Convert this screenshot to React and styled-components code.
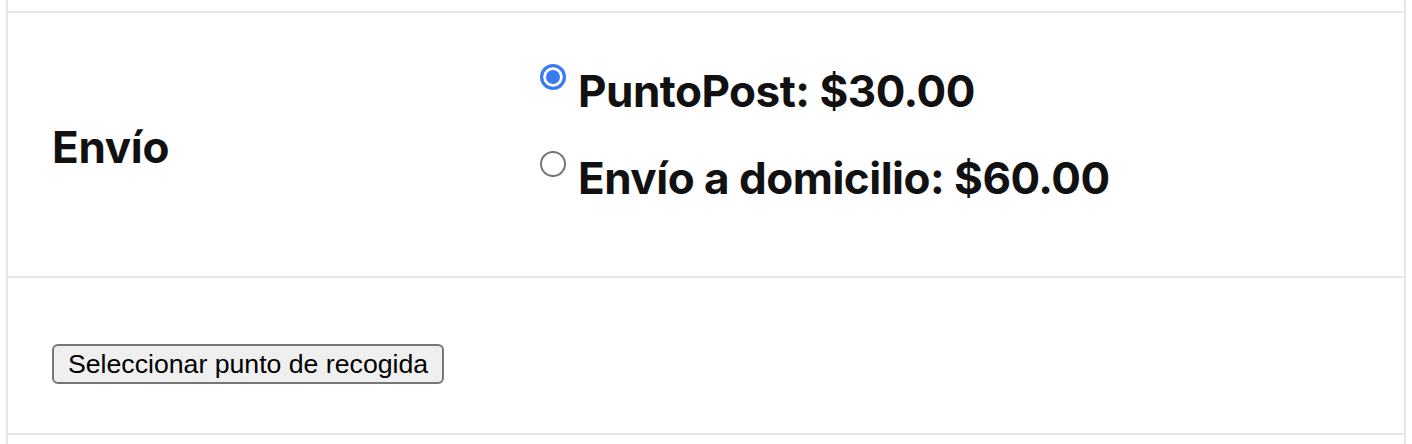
import { useState } from 'react'
import styled, { createGlobalStyle } from 'styled-components'

const GlobalStyle = createGlobalStyle`
  body {
    margin: 0;
    background: #fff;
  }
`

const Page = styled.div`
  padding-left: 6px;
`

const Table = styled.div`
  width: 1400px;
  box-sizing: border-box;
  border-left: 2px solid #e6e6e6;
  border-right: 2px solid #e6e6e6;
`

const Row = styled.div`
  display: grid;
  grid-template-columns: 488px 1fr;
  border-top: ${p => (p.$first ? 'none' : '2px solid #e6e6e6')};
  height: ${p => p.$height}px;
  box-sizing: border-box;
`

const HeadCell = styled.div`
  display: flex;
  align-items: center;
  padding: 5px 44px 0;
  font-family: Inter, "Noto Sans", sans-serif;
  font-weight: 700;
  font-size: 44px;
  color: #111;
  letter-spacing: -0.3px;
`

const ValueCell = styled.div`
  padding: 37px 44px 0;
`

const FullCell = styled.div`
  grid-column: 1 / -1;
  padding: 66px 44px 0;
`

const Options = styled.ul`
  list-style: none;
  margin: 0;
  padding: 0;
  display: flex;
  flex-direction: column;
  gap: 5px;
`

const Option = styled.li`
  display: flex;
  align-items: flex-start;
  height: 82px;
  line-height: 82px;
  font-family: Inter, "Noto Sans", sans-serif;
  font-weight: 700;
  font-size: 44px;
  color: #111;
  letter-spacing: -0.5px;
  white-space: nowrap;
`

const Radio = styled.input`
  appearance: none;
  flex: none;
  width: 26px;
  height: 26px;
  margin: 14px 12px 0 0;
  border-radius: 50%;
  box-sizing: border-box;
  border: 2px solid #767676;
  background: #fff;

  &:checked {
    border: 3px solid #3b7bf2;
    background: #3b7bf2;
    box-shadow: inset 0 0 0 3px #fff;
  }
`

const PickupButton = styled.button`
  height: 40px;
  padding: 0 14px;
  border: 2px solid #767676;
  border-radius: 6px;
  background: #efefef;
  color: #000;
  font-family: "Liberation Sans", Arial, sans-serif;
  font-size: 26.67px;
  line-height: 1;
  cursor: pointer;
`

const options = [
  { id: 'puntopost', label: 'PuntoPost: $30.00' },
  { id: 'domicilio', label: 'Envío a domicilio: $60.00' },
]

export default function App() {
  const [method, setMethod] = useState('puntopost')

  return (
    <Page>
      <GlobalStyle />
      <Table>
        <Row $first $height={11} />
        <Row $height={265}>
          <HeadCell>Envío</HeadCell>
          <ValueCell>
            <Options>
              {options.map(o => (
                <Option key={o.id}>
                  <Radio
                    type="radio"
                    name="shipping"
                    checked={method === o.id}
                    onChange={() => setMethod(o.id)}
                  />
                  {o.label}
                </Option>
              ))}
            </Options>
          </ValueCell>
        </Row>
        <Row $height={157}>
          <FullCell>
            <PickupButton>Seleccionar punto de recogida</PickupButton>
          </FullCell>
        </Row>
        <Row $height={20} />
      </Table>
    </Page>
  )
}
